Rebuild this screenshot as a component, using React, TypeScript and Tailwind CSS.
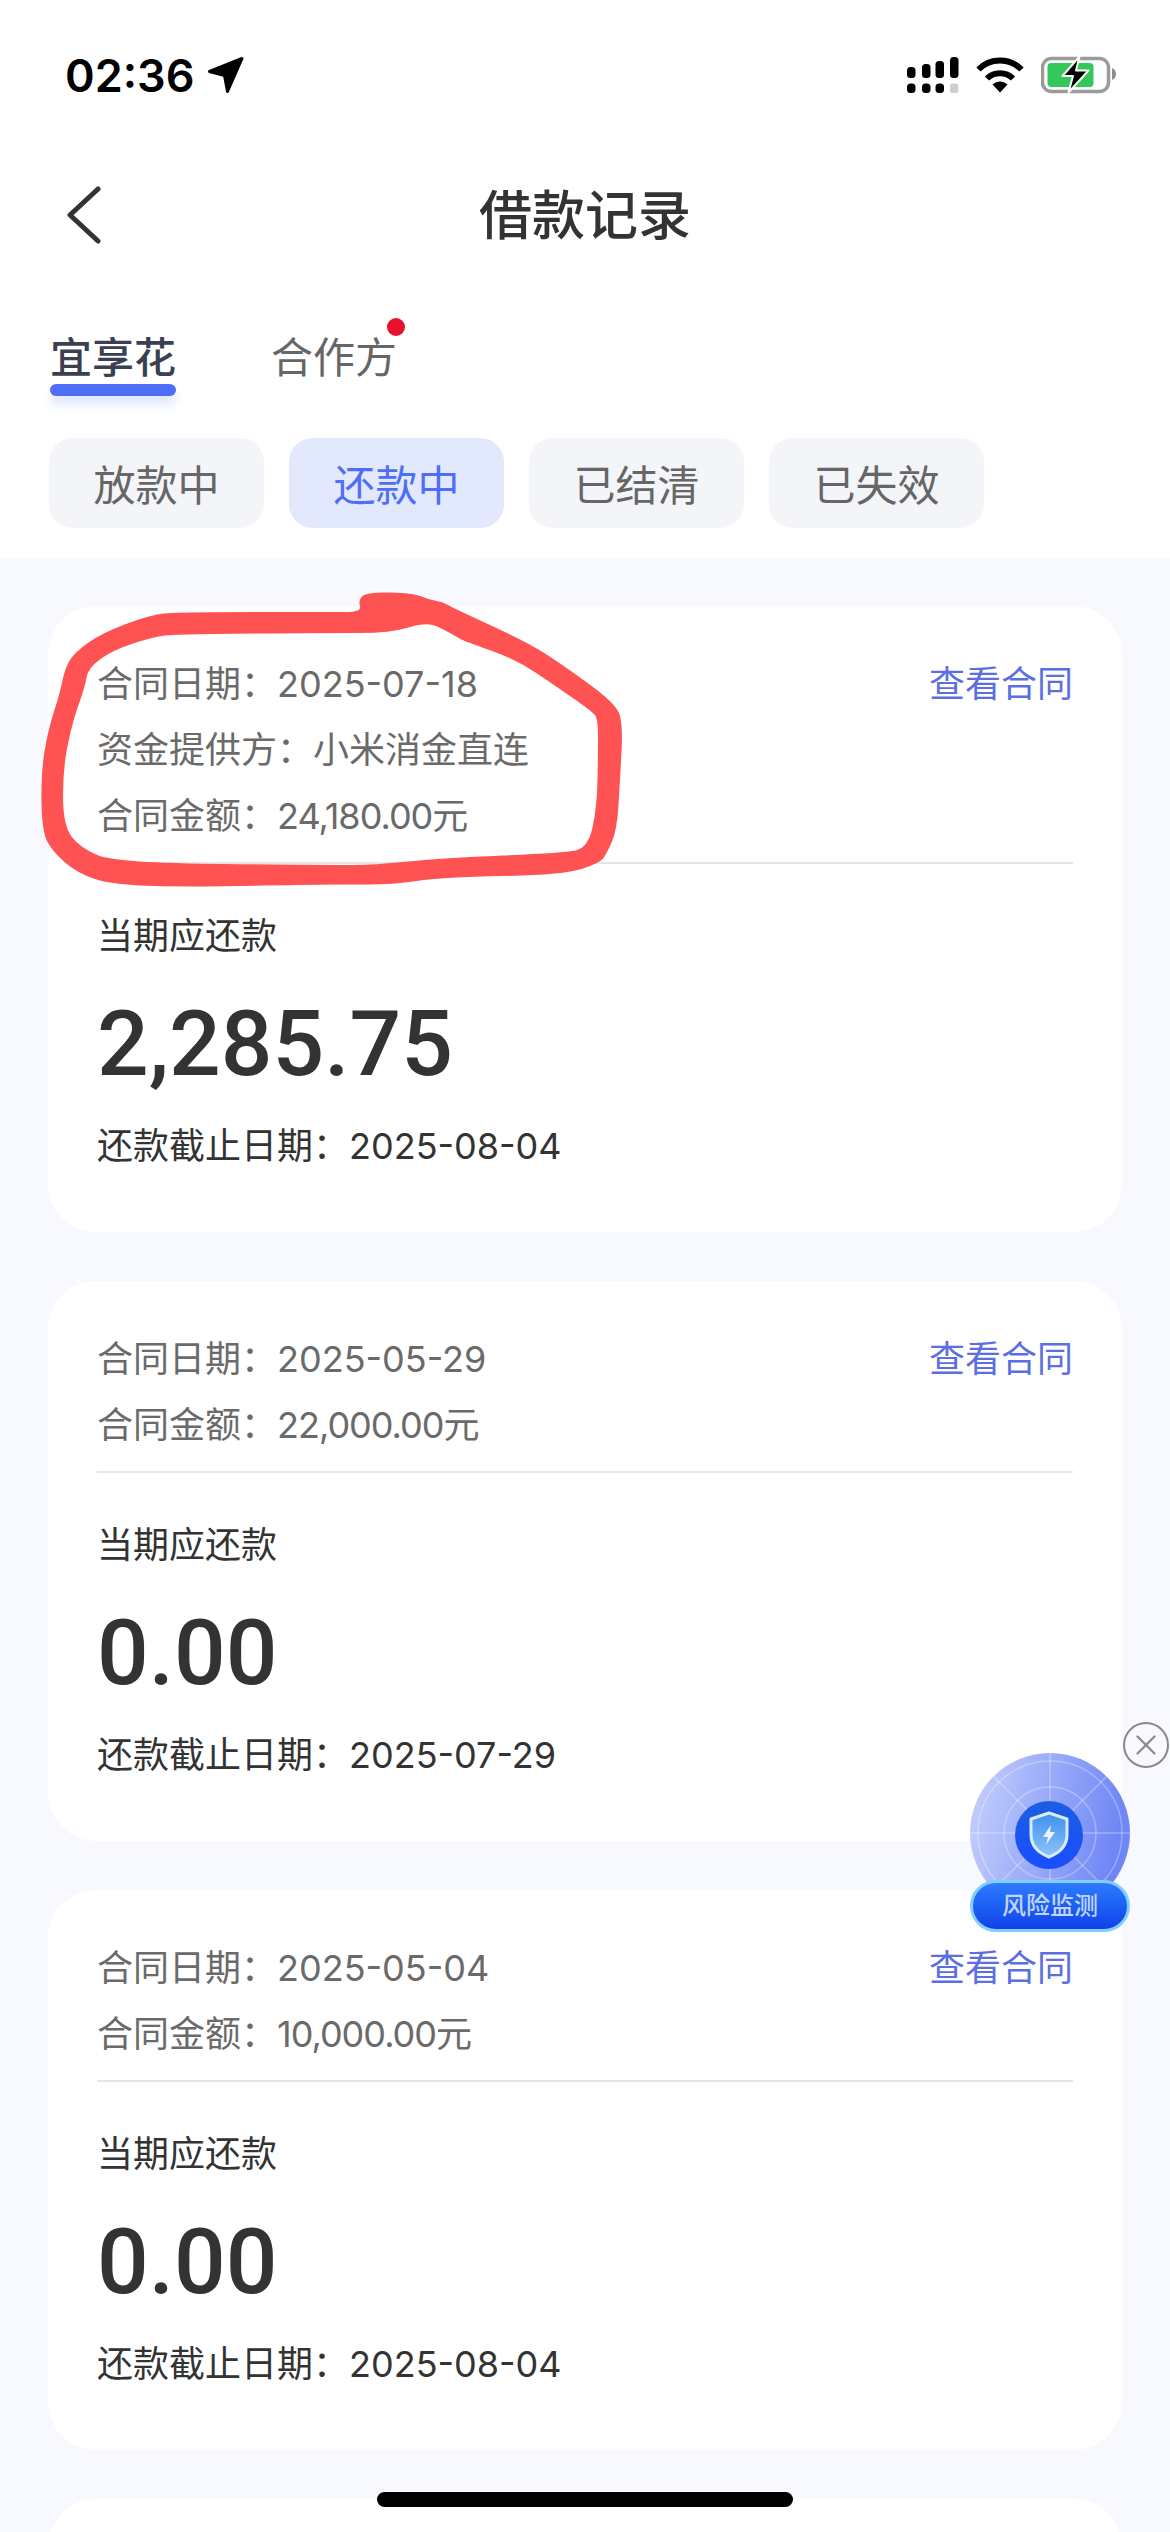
import { X } from "lucide-react";

type Contract = {
  date: string;
  provider?: string;
  amount: string;
  due: string;
  deadline: string;
};

const CONTRACTS: Contract[] = [
  { date: "2025-07-18", provider: "小米消金直连", amount: "24,180.00元", due: "2,285.75", deadline: "2025-08-04" },
  { date: "2025-05-29", amount: "22,000.00元", due: "0.00", deadline: "2025-07-29" },
  { date: "2025-05-04", amount: "10,000.00元", due: "0.00", deadline: "2025-08-04" },
];

const FILTERS = ["放款中", "还款中", "已结清", "已失效"];

// outline of the red marker ring, traced from the screenshot
const MARK_OUTER: number[][] = [
  [177, 612], [150, 615], [102, 633], [75, 652], [65, 668], [60, 693], [48, 730], [41, 773], [42, 832],
  [53, 852], [77, 873], [113, 885], [197, 887], [330, 884], [390, 885], [443, 877], [563, 875], [600, 863],
  [607, 853], [617, 830], [620, 780], [623, 723], [615, 703], [563, 665], [527, 642], [453, 608], [443, 602],
  [430, 600], [413, 593], [367, 592], [358, 600], [362, 612], [330, 612],
];
const MARK_INNER: number[][] = [
  [177, 634], [153, 637], [113, 650], [88, 668], [85, 687], [73, 720], [63, 767], [63, 825], [80, 848],
  [117, 863], [330, 865], [373, 865], [443, 858], [563, 853], [588, 848], [597, 807], [598, 753], [598, 720],
  [593, 712], [557, 687], [517, 660], [470, 643], [462, 640], [445, 630], [427, 622], [390, 633], [330, 633],
];

function smooth(points: number[][]) {
  const mid = (a: number[], b: number[]) => `${(a[0] + b[0]) / 2} ${(a[1] + b[1]) / 2}`;
  const last = points[points.length - 1];
  let d = `M${mid(last, points[0])}`;
  points.forEach((p, i) => {
    d += `Q${p[0]} ${p[1]} ${mid(p, points[(i + 1) % points.length])}`;
  });
  return d + "Z";
}

function StatusIcons() {
  return (
    <div className="flex items-center gap-[17px]">
      <svg width="52" height="38" viewBox="0 0 52 38" fill="#000">
        <rect x="0" y="11" width="8.5" height="11" rx="3.5" />
        <rect x="15" y="8" width="8.5" height="14" rx="3.5" />
        <rect x="28.5" y="5" width="8.5" height="17" rx="3.5" />
        <rect x="43" y="1" width="8.5" height="21" rx="3.5" />
        <rect x="0" y="27.5" width="8.5" height="9.5" rx="3.5" />
        <rect x="15" y="27.5" width="8.5" height="9.5" rx="3.5" />
        <rect x="28.5" y="27.5" width="8.5" height="9.5" rx="3.5" />
        <rect x="43" y="27.5" width="8.5" height="9.5" rx="2.5" fill="#cfcfcf" />
      </svg>
      <svg width="48" height="38" viewBox="0 0 48 38" fill="none" stroke="#000" strokeWidth="6">
        <path d="M2.5 13.5C14 1.5 34 1.5 45.5 13.5" />
        <path d="M11 22.5C18 15.5 30 15.5 37 22.5" />
        <path d="M16.5 28.5L24 36.5L31.5 28.5C27 24.5 21 24.5 16.5 28.5Z" fill="#000" stroke="none" />
      </svg>
      <svg width="76" height="38" viewBox="0 0 76 38" fill="none">
        <rect x="1.5" y="2.5" width="66" height="33" rx="9" stroke="#9b9b9b" strokeWidth="3.5" />
        <rect x="6.5" y="7" width="46" height="24" rx="4" fill="#34c759" />
        <path d="M71 12C74 13 75 15.5 75 18C75 20.5 74 23 71 24Z" fill="#8e8e8e" />
        <path d="M38.5 0.5L21.5 20H32L27.5 36.5L47.5 14.5H35Z" fill="#000" stroke="#fff" strokeWidth="2" strokeLinejoin="round" />
      </svg>
    </div>
  );
}

function ContractCard({ item }: { item: Contract }) {
  return (
    <div className="rounded-[48px] bg-white px-[49px] pb-[63px] pt-[45px]">
      <div className="relative border-b-2 border-[#e6e6e6] pb-[13px] text-[36px] leading-[66px] text-[#6a6a6a]">
        <div>合同日期：{item.date}</div>
        {item.provider && <div>资金提供方：{item.provider}</div>}
        <div>
          合同金额：<span className="tracking-[-1px]">{item.amount}</span>
        </div>
        <span className="absolute right-0 top-0 text-[#5b6fe3]">查看合同</span>
      </div>
      <div className="mt-[49px] text-[36px] leading-[46px] text-[#333333]">当期应还款</div>
      <div className="mt-[31px] font-['Roboto'] text-[91px] font-medium leading-[108px] text-[#333333]">{item.due}</div>
      <div className="mt-[25px] text-[36px] leading-[46px] text-[#333333]">还款截止日期：{item.deadline}</div>
    </div>
  );
}

function RiskWidget() {
  return (
    <>
      <button className="absolute left-[1123px] top-[1722px] flex h-[46px] w-[46px] items-center justify-center rounded-full border-2 border-[#8a8a8a] text-[#8a8a8a]">
        <X size={34} strokeWidth={1.6} />
      </button>
      <div className="absolute left-[970px] top-[1753px] h-[180px] w-[160px]">
        <svg width="160" height="160" viewBox="0 0 160 160" fill="none">
          <defs>
            <linearGradient id="radar" x1="0" y1="0" x2="1" y2="0.2">
              <stop offset="0" stopColor="#c8d2fc" />
              <stop offset="1" stopColor="#6e86f6" />
            </linearGradient>
            <linearGradient id="core" x1="0" y1="0" x2="0" y2="1">
              <stop offset="0" stopColor="#1a5fe0" />
              <stop offset="1" stopColor="#1a4dff" />
            </linearGradient>
            <linearGradient id="shield" x1="0" y1="0" x2="0" y2="1">
              <stop offset="0" stopColor="#3f8fef" />
              <stop offset="1" stopColor="#8cc4fb" />
            </linearGradient>
          </defs>
          <circle cx="80" cy="80" r="80" fill="url(#radar)" />
          <g stroke="#fff" strokeOpacity="0.3" strokeWidth="1.5">
            <circle cx="80" cy="80" r="72" />
            <circle cx="80" cy="80" r="46" />
            <path d="M80 0V160M0 80H160M23 23L137 137M137 23L23 137" />
          </g>
          <circle cx="79" cy="82" r="34" fill="url(#core)" />
          <path
            d="M79 60L97 66V82C97 93 89 100 79 104C69 100 61 93 61 82V66Z"
            fill="url(#shield)"
            stroke="#d6ecff"
            strokeWidth="3"
            strokeLinejoin="round"
          />
          <path d="M81 72L73 84H78L76 92L85 79H80Z" fill="#eaf5ff" />
        </svg>
        <div className="absolute left-0 top-[127px] flex h-[52px] w-[160px] items-center justify-center rounded-full border-[3px] border-[#7fd0fb] bg-gradient-to-b from-[#2f7bff] to-[#1240e8] text-[24px] font-medium text-[#c3d4ff]">
          风险监测
        </div>
      </div>
    </>
  );
}

export default function App() {
  return (
    <div className="relative h-[2532px] w-[1170px] overflow-hidden bg-[#f8f9fe] font-['Inter','Noto_Sans_CJK_SC',sans-serif]">
      <div className="bg-white pb-[30px]">
        <div className="flex h-[150px] items-center justify-between pl-[65px] pr-[53px]">
          <div className="flex items-center gap-[12px]">
            <span className="text-[45px] font-semibold leading-none text-black">02:36</span>
            <svg width="38" height="38" viewBox="0 0 38 38" fill="#000" stroke="#000" strokeWidth="3" strokeLinejoin="round">
              <path d="M35 2.5L2.5 15.5L17.5 19.5L20.5 35.5Z" />
            </svg>
          </div>
          <StatusIcons />
        </div>
        <div className="relative flex h-[128px] items-center justify-center pt-[6px]">
          <svg className="absolute left-[65px] top-[36px]" width="38" height="58" viewBox="0 0 38 58" fill="none" stroke="#333333" strokeWidth="5" strokeLinecap="round" strokeLinejoin="round">
            <path d="M33 3L5 29L33 55" />
          </svg>
          <h1 className="text-[53px] font-medium text-[#333333]">借款记录</h1>
        </div>
        <div className="flex gap-[95px] pl-[50px] pt-[55px]">
          <div className="flex flex-col">
            <span className="text-[42px] font-medium leading-[50px] text-[#3a3f52]">宜享花</span>
            <span className="mt-px h-[12px] rounded-full bg-[#4f6ef7] shadow-[0_8px_10px_rgba(80,110,250,0.18)]" />
          </div>
          <div className="relative">
            <span className="text-[42px] leading-[50px] text-[#666666]">合作方</span>
            <span className="absolute left-[116px] top-[-15px] h-[18px] w-[18px] rounded-full bg-[#e8112d]" />
          </div>
        </div>
        <div className="mt-[42px] flex gap-[25px] pl-[49px]">
          {FILTERS.map((f) => (
            <div
              key={f}
              className={
                f === "还款中"
                  ? "flex h-[90px] w-[215px] items-center justify-center rounded-[24px] bg-[#e3e9fc] pt-[5px] text-[42px] text-[#4f6ef7]"
                  : "flex h-[90px] w-[215px] items-center justify-center rounded-[24px] bg-[#f4f5f9] pt-[5px] text-[42px] text-[#666666]"
              }
            >
              {f}
            </div>
          ))}
        </div>
      </div>

      <div className="flex flex-col gap-[49px] px-[48px] pt-[48px]">
        {CONTRACTS.map((c) => (
          <ContractCard key={c.date} item={c} />
        ))}
        <div className="h-[200px] rounded-[48px] bg-white" />
      </div>

      {/* marker scribble from the screenshot */}
      <svg className="absolute left-0 top-0" width="1170" height="1000" viewBox="0 0 1170 1000">
        <path d={smooth(MARK_OUTER) + smooth(MARK_INNER)} fill="#ff5252" fillRule="evenodd" />
      </svg>

      <RiskWidget />

      <div className="absolute bottom-[25px] left-[377px] h-[15px] w-[416px] rounded-full bg-black" />
    </div>
  );
}
